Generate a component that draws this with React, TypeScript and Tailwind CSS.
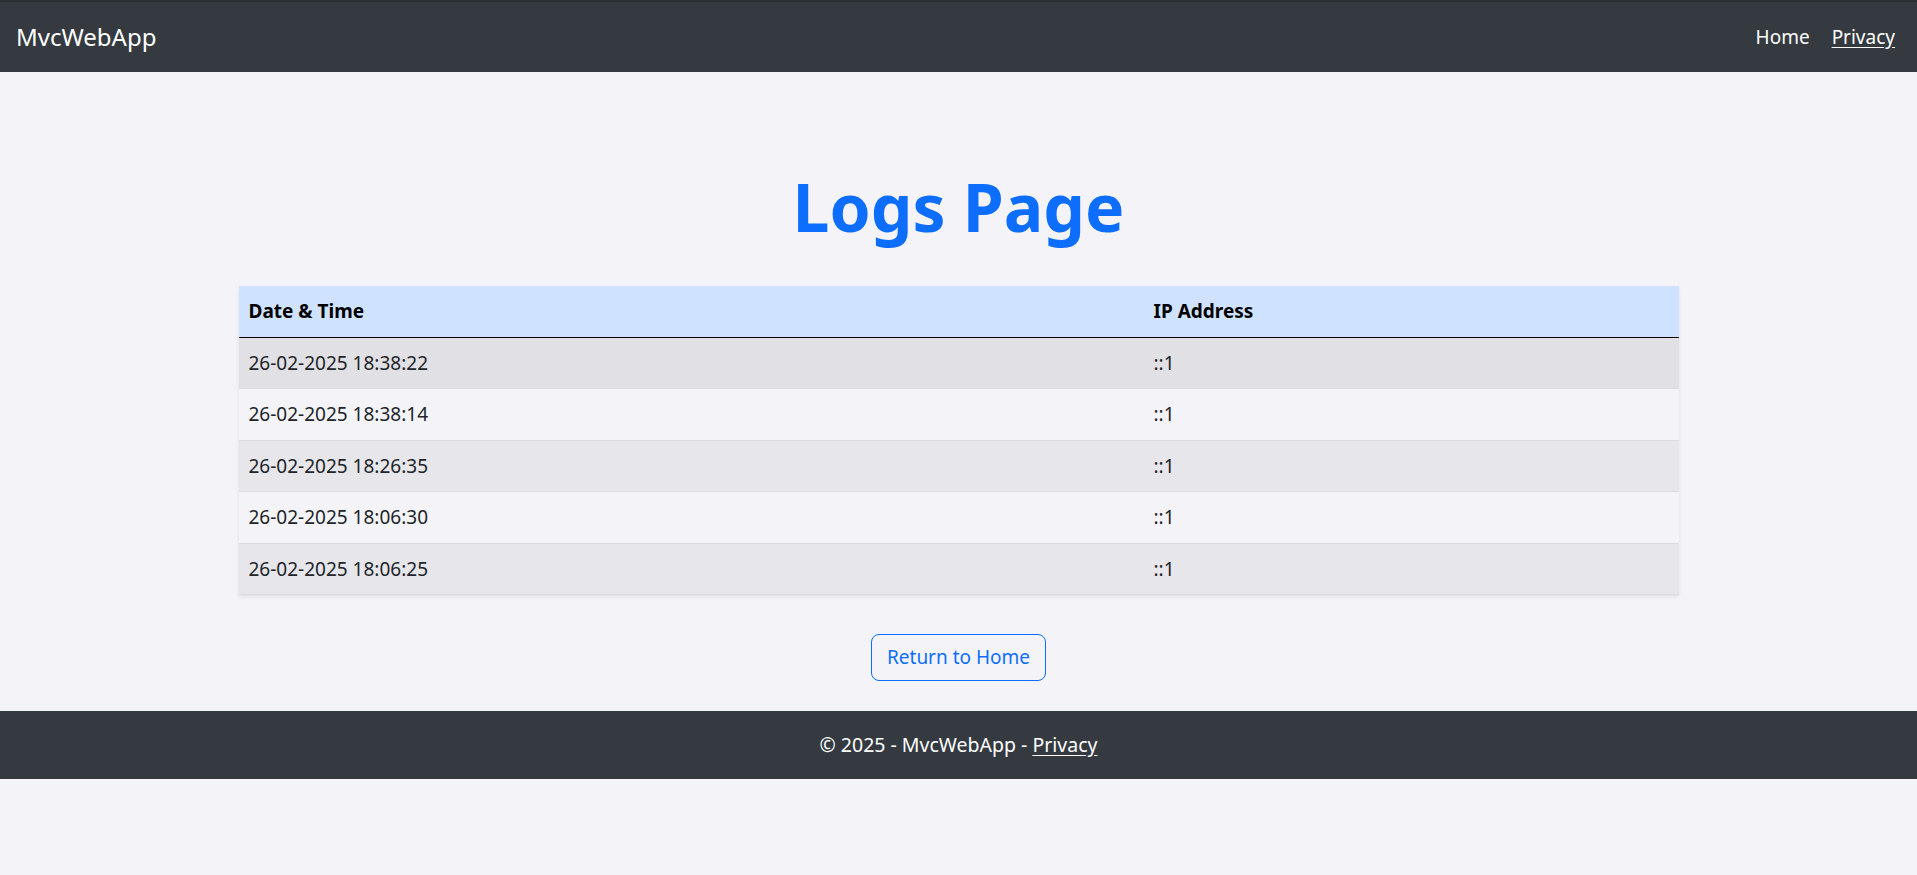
const logs = [
  { time: "26-02-2025 18:38:22", ip: "::1" },
  { time: "26-02-2025 18:38:14", ip: "::1" },
  { time: "26-02-2025 18:26:35", ip: "::1" },
  { time: "26-02-2025 18:06:30", ip: "::1" },
  { time: "26-02-2025 18:06:25", ip: "::1" }
]

export default function App() {
  return (
    <div className="min-h-screen bg-[#f4f4f8] font-['Noto_Sans',sans-serif] text-[#212529]">
      <header className="h-[72px] bg-[#343a40] border-t-2 border-[#2b3035] flex items-center justify-between pl-4 pr-[22px]">
        <a className="text-[24px] text-white">MvcWebApp</a>
        <nav className="flex items-center gap-[22px] text-[19px] text-white">
          <a>Home</a>
          <a className="underline underline-offset-[3px]">Privacy</a>
        </nav>
      </header>

      <main className="w-[1440px] mx-auto">
        <h1 className="mt-[92px] mb-[38px] text-center text-[66px] leading-[84px] font-bold text-[#0d6efd]">
          Logs Page
        </h1>

        <table className="w-full text-[19px] leading-[30px] shadow-[0_2px_4px_rgba(0,0,0,0.08)] border-collapse">
          <thead>
            <tr className="h-[51px] bg-[#cfe2ff] border-b border-black text-black">
              <th className="w-[905px] text-left font-bold px-[10px]">Date &amp; Time</th>
              <th className="text-left font-bold px-[10px]">IP Address</th>
            </tr>
          </thead>
          <tbody>
            {logs.map((l, i) => (
              <tr
                key={i}
                className={
                  i === 0
                    ? "h-[51.5px] bg-[#e1e0e5] border-b border-[#dcdce1]"
                    : i % 2 === 0
                    ? "h-[51.5px] bg-[#e7e6eb] border-b border-[#dcdce1]"
                    : "h-[51.5px] bg-[#f4f4f8] border-b border-[#dcdce1]"
                }
              >
                <td className="px-[10px]">{l.time}</td>
                <td className="px-[10px]">{l.ip}</td>
              </tr>
            ))}
          </tbody>
        </table>

        <div className="flex justify-center mt-[39px] mb-[30px]">
          <button className="h-[47px] px-[15px] border border-[#0d6efd] rounded-[8px] text-[19px] text-[#0d6efd]">
            Return to Home
          </button>
        </div>
      </main>

      <footer className="h-[68px] bg-[#343a40] flex items-center justify-center text-[19.5px] text-white">
        <span>
          © 2025 - MvcWebApp - <a className="underline underline-offset-[3px]">Privacy</a>
        </span>
      </footer>
    </div>
  )
}
